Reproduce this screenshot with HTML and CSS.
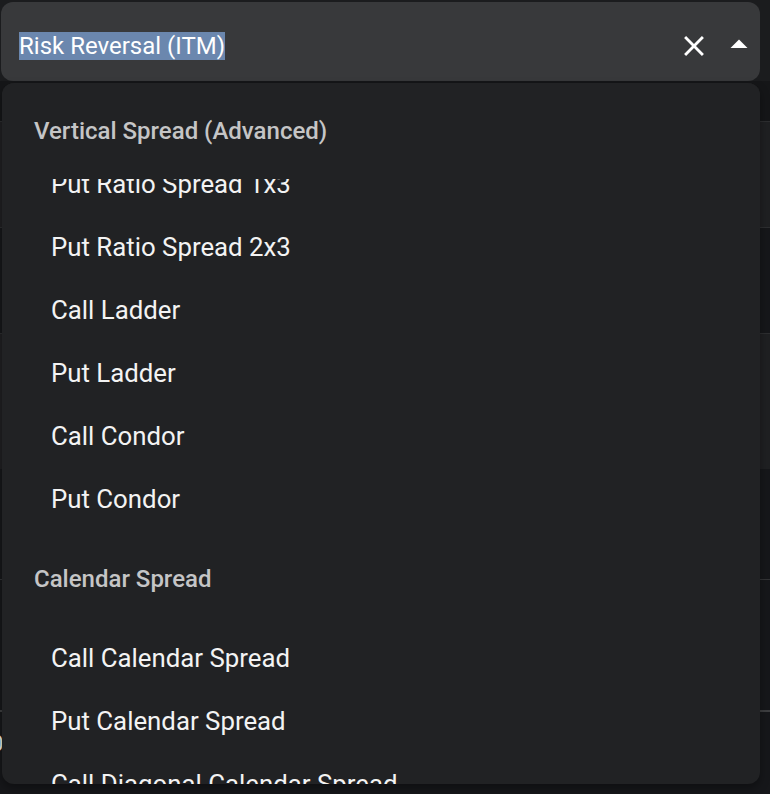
FILE: index.html
```html
<!DOCTYPE html>
<html lang="en">
<head>
<meta charset="utf-8">
<title>Strategy picker</title>
<link rel="stylesheet" href="styles.css">
</head>
<body>
<div class="page">
  <div class="field">
    <div class="value"><span class="sel">Risk Reversal (ITM)</span></div>
    <span class="clear" aria-label="Clear">
      <svg viewBox="0 0 24 24" width="34" height="34"><path fill="#fff" d="M19 6.41 17.59 5 12 10.59 6.41 5 5 6.41 10.59 12 5 17.59 6.41 19 12 13.41 17.59 19 19 17.59 13.41 12z"/></svg>
    </span>
    <span class="popup" aria-label="Close">
      <svg viewBox="0 0 18 10" width="18" height="10"><path fill="#fff" d="M0.5 9 L9 0.5 L17.5 9 Z"/></svg>
    </span>
  </div>

  <div class="rows">
    <div class="row r-a"></div>
    <div class="row r-b"></div>
    <div class="row r-c"></div>
    <div class="row r-d"><span class="edge e1">t</span><span class="edge e2">t</span></div>
    <div class="row r-e"></div>
    <div class="row r-f"><span class="edge e3">-</span></div>
    <div class="row r-g"><span class="edge e4">0</span></div>
  </div>

  <div class="popper">
    <div class="viewport">
      <div class="subheader sticky">Vertical Spread (Advanced)</div>
      <ul class="options first">
        <li>Put Ratio Spread 1x3</li>
        <li>Put Ratio Spread 2x3</li>
        <li>Call Ladder</li>
        <li>Put Ladder</li>
        <li>Call Condor</li>
        <li>Put Condor</li>
      </ul>
      <div class="subheader">Calendar Spread</div>
      <ul class="options">
        <li>Call Calendar Spread</li>
        <li>Put Calendar Spread</li>
        <li>Call Diagonal Calendar Spread</li>
        <li>Put Diagonal Calendar Spread</li>
      </ul>
    </div>
  </div>
</div>
</body>
</html>
```
FILE: styles.css
```css
* { box-sizing: border-box; }
html, body { margin: 0; padding: 0; }
body {
  background: #17181a;
  font-family: Roboto, "Noto Sans", "Liberation Sans", sans-serif;
  width: 770px;
  height: 794px;
  overflow: hidden;
}
.page {
  position: relative;
  width: 770px;
  height: 794px;
  padding-top: 2px;
  background: #1b1c1e;
}
.field {
  margin-left: 1px;
  width: 759px;
  height: 79px;
  background: #38393b;
  border-radius: 12px;
  display: flex;
  align-items: center;
  padding-left: 18px;
  padding-right: 12px;
  padding-top: 9px;
}
.value {
  flex: 1;
  font-size: 24px;
  color: #fff;
  line-height: 28px;
}
.sel {
  background: #6b87ae;
  display: inline-block;
  line-height: 28px;
}
.clear {
  display: flex;
  width: 34px;
  height: 34px;
  margin-right: 19px;
}
.popup {
  display: flex;
  width: 18px;
  height: 10px;
  margin-top: -4px;
}

.rows { display: flex; flex-direction: column; }
.row { position: relative; }
.r-a { height: 41px; background: #151618; border-bottom: 1px solid #2d2e30; }
.r-b { height: 106px; background: #1f2022; border-bottom: 1px solid #2d2e30; }
.r-c { height: 106px; background: #16171a; border-bottom: 1px solid #2d2e30; }
.r-d { height: 135px; background: #1f2022; }
.r-e { height: 111px; background: #16171a; border-bottom: 1px solid #333436; }
.r-f { height: 132px; background: #16171a; border-bottom: 2px solid #3d3e40; }
.r-g { height: 82px; background: #16171a; }
.edge {
  display: block;
  color: #e8e8e8;
  font-size: 22px;
  line-height: 20px;
  margin-left: -9px;
  width: 12px;
}
.e1 { margin-top: 12px; }
.e2 { margin-top: 24px; }
.e3 { margin-top: 22px; }
.e4 { margin-top: 22px; }

.popper {
  position: absolute;
  top: 83px;
  left: 2px;
  width: 758px;
  height: 701px;
  background: #212224;
  border-radius: 12px;
  overflow: hidden;
  box-shadow: 0 4px 10px rgba(0,0,0,0.35);
}
.viewport {
  height: 701px;
  overflow: hidden;
}
.subheader {
  height: 96px;
  line-height: 96px;
  padding-left: 32px;
  font-size: 24px;
  font-weight: 500;
  color: #c5c5c6;
  background: #212224;
}
.sticky {
  position: relative;
  z-index: 1;
}
.options {
  list-style: none;
  margin: 0;
  padding: 0;
}
.options.first { margin-top: -26px; }
.options li {
  height: 63px;
  line-height: 63px;
  padding-left: 49px;
  font-size: 25.8px;
  color: #f3f3f3;
  white-space: nowrap;
}
```
